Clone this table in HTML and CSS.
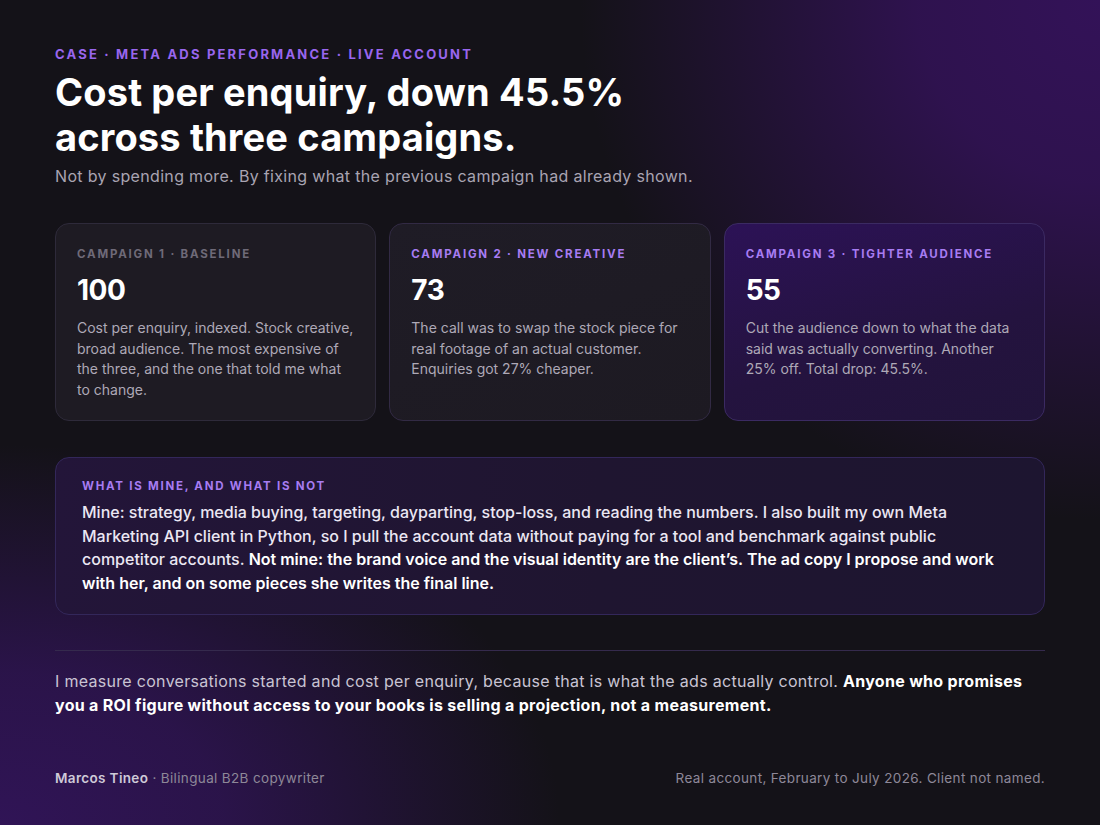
FILE: index.html
```html
<!DOCTYPE html>
<html lang="en">
<head>
<meta charset="utf-8">
<title>Case · Meta Ads Performance</title>
<link rel="stylesheet" href="styles.css">
</head>
<body>
<main class="page">
  <header class="intro">
    <p class="eyebrow">CASE · META ADS PERFORMANCE · LIVE ACCOUNT</p>
    <h1 class="title">Cost per enquiry, down 45.5%<br>across three campaigns.</h1>
    <p class="lede">Not by spending more. By fixing what the previous campaign had already shown.</p>
  </header>

  <section class="cards">
    <article class="card card-base">
      <p class="card-label">CAMPAIGN 1 · BASELINE</p>
      <p class="card-num">100</p>
      <p class="card-text">Cost per enquiry, indexed. Stock creative, broad audience. The most expensive of the three, and the one that told me what to change.</p>
    </article>
    <article class="card card-mid">
      <p class="card-label accent">CAMPAIGN 2 · NEW CREATIVE</p>
      <p class="card-num">73</p>
      <p class="card-text">The call was to swap the stock piece for real footage of an actual customer. Enquiries got 27% cheaper.</p>
    </article>
    <article class="card card-best">
      <p class="card-label accent">CAMPAIGN 3 · TIGHTER AUDIENCE</p>
      <p class="card-num">55</p>
      <p class="card-text">Cut the audience down to what the data said was actually converting. Another 25% off. Total drop: 45.5%.</p>
    </article>
  </section>

  <section class="mine">
    <p class="card-label accent">WHAT IS MINE, AND WHAT IS NOT</p>
    <p class="mine-text">Mine: strategy, media buying, targeting, dayparting, stop-loss, and reading the numbers. I also built my own Meta Marketing API client in Python, so I pull the account data without paying for a tool and benchmark against public competitor accounts. <strong>Not mine: the brand voice and the visual identity are the client’s. The ad copy I propose and work with her, and on some pieces she writes the final line.</strong></p>
  </section>

  <hr class="rule">

  <p class="closing">I measure conversations started and cost per enquiry, because that is what the ads actually control. <strong>Anyone who promises you a ROI figure without access to your books is selling a projection, not a measurement.</strong></p>

  <footer class="foot">
    <p class="sig"><strong>Marcos Tineo</strong> · Bilingual B2B copywriter</p>
    <p class="note">Real account, February to July 2026. Client not named.</p>
  </footer>
</main>
</body>
</html>
```

FILE: styles.css
```css
html, body {
  margin: 0;
  padding: 0;
}
body {
  width: 1100px;
  height: 825px;
  overflow: hidden;
  background-color: #141218;
  background-image:
    radial-gradient(ellipse 520px 520px at 100% 0%, rgba(51,18,88,1) 0%, rgba(51,18,88,0.85) 35%, rgba(51,18,88,0) 100%),
    radial-gradient(ellipse 560px 380px at 0% 100%, rgba(48,20,86,1) 0%, rgba(48,20,86,0.8) 40%, rgba(48,20,86,0) 100%);
  font-family: "Inter", "Liberation Sans", sans-serif;
  color: #ece9f2;
}
p { margin: 0; }
.page {
  box-sizing: border-box;
  width: 1100px;
  height: 825px;
  padding: 46px 55px 0 55px;
  display: flex;
  flex-direction: column;
}
.eyebrow {
  font-size: 13px;
  font-weight: 700;
  letter-spacing: 2.2px;
  color: #9966ee;
  line-height: 16px;
}
.title {
  margin: 8px 0 0 0;
  font-size: 38px;
  line-height: 45px;
  font-weight: 700;
  color: #ffffff;
  letter-spacing: 0.15px;
}
.lede {
  margin-top: 5px;
  font-size: 16px;
  line-height: 22px;
  color: #a9a4b2;
  letter-spacing: 0.33px;
}
.cards {
  margin-top: 36px;
  display: grid;
  grid-template-columns: repeat(3, 1fr);
  gap: 13px;
  height: 197px;
}
.card {
  box-sizing: border-box;
  border-radius: 14px;
  padding: 23px 21px 20px 21px;
  border: 1px solid #2e2a3a;
  background: #1e1b23;
}
.card-mid {
  background: linear-gradient(160deg, #1f1c26 0%, #1d1a22 100%);
  border-color: #322a44;
}
.card-best {
  background: linear-gradient(165deg, #2c1256 0%, #24133f 60%, #21143a 100%);
  border-color: #3b2a62;
}
.card-label {
  font-size: 11.5px;
  font-weight: 700;
  letter-spacing: 1.8px;
  line-height: 14px;
  color: #6f6a78;
}
.card-label.accent {
  color: #a77cf2;
}
.card-num {
  margin-top: 12px;
  font-size: 28px;
  font-weight: 700;
  line-height: 34px;
  color: #ffffff;
  letter-spacing: -0.5px;
}
.card-text {
  margin-top: 11px;
  font-size: 14px;
  line-height: 20.5px;
  color: #aea9b7;
}
.mine {
  box-sizing: border-box;
  margin-top: 37px;
  height: 158px;
  border-radius: 14px;
  padding: 21px 27px 20px 26px;
  border: 1px solid #33275a;
  background: linear-gradient(90deg, #231539 0%, #1f1530 55%, #1d1530 100%);
}
.mine .card-label {
  letter-spacing: 1.75px;
}
.mine-text {
  margin-top: 8px;
  font-size: 16px;
  line-height: 23.5px;
  font-weight: 500;
  color: #ebe7f3;
}
.mine-text strong {
  font-weight: 600;
  color: #ffffff;
}
.rule {
  margin: 35px 0 0 0;
  border: 0;
  height: 1px;
  background: #352a4d;
}
.closing {
  margin-top: 18px;
  font-size: 16px;
  line-height: 24px;
  color: #c9c4d3;
  letter-spacing: 0.3px;
}
.closing strong {
  font-weight: 700;
  color: #ffffff;
}
.foot {
  margin-top: 52px;
  display: flex;
  justify-content: space-between;
  align-items: baseline;
  font-size: 13.5px;
  line-height: 18px;
  color: #8e8898;
  letter-spacing: 0.35px;
}
.sig strong {
  font-weight: 600;
  color: #cfcad8;
}
```
